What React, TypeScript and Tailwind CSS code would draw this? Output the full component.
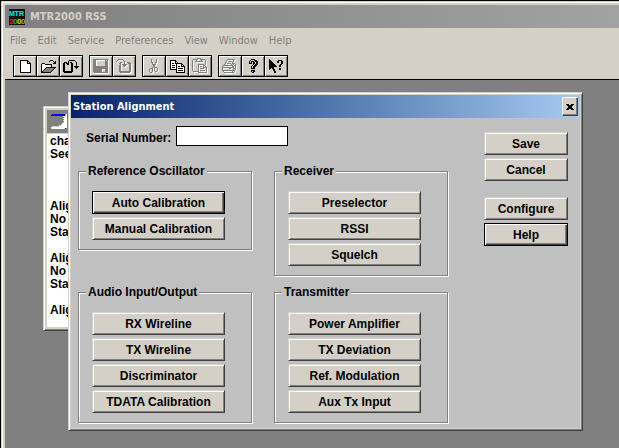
import React, { useState } from 'react';
import clsx from 'clsx';

const COLORS: Record<string, string> = {
  K: '#000000',
  W: '#ffffff',
  D: '#808080',
  B: '#0000ff',
  L: '#d4d0c8',
};

const newIcon = [
  'KKKKKKKK...',
  'KWWWWWWKK..',
  'KWWWWWWKWK.',
  'KWWWWWWKKKK',
  'KWWWWWWWWWK',
  'KWWWWWWWWWK',
  'KWWWWWWWWWK',
  'KWWWWWWWWWK',
  'KWWWWWWWWWK',
  'KWWWWWWWWWK',
  'KWWWWWWWWWK',
  'KWWWWWWWWWK',
  'KKKKKKKKKKK',
];

const openIcon = [
  '.........KKK...',
  '........K...K.K',
  '.............KK',
  '.KKK........KKK',
  'KWWWKKKKKKK....',
  'KWWWWWWWWWK....',
  'KWWWWWWWWWK....',
  'KWWWWKKKKKKKKKK',
  'KWWWKDDDDDDDDK.',
  'KWWKDDDDDDDDK..',
  'KWKDDDDDDDDK...',
  'KKDDDDDDDDK....',
  'KKKKKKKKKK.....',
];

const readIcon = [
  '......KKKKKK....',
  '.....K......K...',
  '.KKK.K.KK....K..',
  'KK.KKK..KK...K..',
  'KK..KK..KK...K..',
  'KK......KK...K..',
  'KK......KK.KKKKK',
  'KK......KK..KKK.',
  'KK......KK...K..',
  'KK......KK......',
  'KK......KK......',
  'KKKKKKKKKK......',
  '.KKKKKKKK.......',
];

const saveIcon = [
  'DDDDDDDDDDDDDDD',
  'DDD.........D.D',
  'DDD.........DDD',
  'DDD.........DDD',
  'DDD.........DDD',
  'DDD.........DDD',
  'DDD.........DDD',
  'DDDDDDDDDDDDDDD',
  'DDDDDDDDDDDDDDD',
  'DDDDDDDDDDDDDDD',
  'DDDDDDDDD...DDD',
  'DDDDDDDDD...DDD',
  'DDDDDDDDD...DDD',
  '.DDDDDDDDDDDDDD',
];

const writeIcon = [
  '..DDDDD........',
  '.D.....D.......',
  'D.......D......',
  '....DD..D..DDD.',
  '...DD...D...DDD',
  '....D.DDDDD..DD',
  '...DD..DDD...DD',
  '...DD...D....DD',
  '...DD........DD',
  '...DD........DD',
  '...DD........DD',
  '...DD........DD',
  '...DDDDDDDDDDDD',
  '....DDDDDDDDDD.',
];

const cutIcon = [
  '..D....D..',
  '..D....D..',
  '..D....D..',
  '..DD..DD..',
  '...D..D...',
  '...DDDD...',
  '....DD....',
  '....DD....',
  '...D.DDD..',
  '.DDD.D..D.',
  'D..D.D..D.',
  'D..D.D..D.',
  'D..D..DD..',
  '.DD.......',
];

const copyIcon = [
  'KKKKKK.........',
  'KWWWWKK........',
  'KWWWWKWK.......',
  'KWKKWKKKKKKK...',
  'KWWWWWKWWWWKK..',
  'KWKKKWKWWWWKWK.',
  'KWWWWWKWKKWKKKK',
  'KWKKKWKWWWWWWWK',
  'KWWWWWKWKKKKKWK',
  'KKKKKKKWWWWWWWK',
  '......KWKKKKKWK',
  '......KWWWWWWWK',
  '......KKKKKKKKK',
];

const pasteIcon = [
  '.....DDDD......',
  '.DDDDD..DDDDD..',
  'D...D....D...D.',
  'D..DDDDDDDD..D.',
  'D............D.',
  'D............D.',
  'D.....DDDDDD.D.',
  'D.....D....DD..',
  'D.....D.DD.D.D.',
  'D.....D....DDDD',
  'D.....D.DDDD..D',
  'D.....D.......D',
  'D.....D.DDDDD.D',
  '.DDDDDD.......D',
  '......DDDDDDDDD',
];

const printIcon = [
  '.....DDDDDDDD..',
  '....D......D...',
  '....D.DDDD.D...',
  '...D......D....',
  '...D.DDDD.DDD..',
  '..D......D.D.D.',
  '.DDDDDDDDDD.DD.',
  'D.........DD.D.',
  'DDDDDDDDDDDD.D.',
  'D......DD..DDD.',
  'D..........D.D.',
  'DDDDDDDDDDDDD..',
  '.D........D.D..',
  '..DDDDDDDDDD...',
];

const helpIcon = [
  '...KKKK...',
  '..KLLLKKK.',
  '.KLKKKLKKK',
  '.KLK.KKLKK',
  '.KKK.KKLKK',
  '.....KLKKK',
  '....KLKKK.',
  '...KLKKK..',
  '...KLKK...',
  '...KKKK...',
  '..........',
  '...KKKK...',
  '...KLKK...',
  '....KK....',
];

const contextHelpIcon = [
  'K..............',
  'KK.......KKKK..',
  'KKK.....KK..KK.',
  'KKKK....KK..KK.',
  'KKKKK.......KK.',
  'KKKKKK.....KK..',
  'KKKKKKK...KK...',
  'KKKKKKKK..KK...',
  'KKKKK..........',
  'KK.KK.....KK...',
  'K...KK....KK...',
  '....KK.........',
  '.....KK........',
  '.....KK........',
];

const pageIcon = [
  '.BBBBBBBBBBBBB.W',
  'KBBBBBBBBBBBBKLW',
  '............LWWW',
  '.............WWW',
  '............LWWW',
  '.............WWW',
  '............LWWW',
  '.............WWW',
  '............LWWW',
  '...........LWWWW',
  '..........LWWWWW',
  '........LLWWWWWW',
  '.LLLLLLLWWWWWWWW',
  'WWWWWWWWWWWWWWWW',
  'LWWWWWWWWWWWWWK.',
];

const closeIcon = ['KKK..KKK', '.KKKKKK.', '..KKKK..', '..KKKK..', '.KKKKKK.', 'KKK..KKK'];

const toolbar = [
  [
    { label: 'New', icon: newIcon },
    { label: 'Open', icon: openIcon },
    { label: 'Read', icon: readIcon },
  ],
  [
    { label: 'Save file', icon: saveIcon, disabled: true },
    { label: 'Write', icon: writeIcon, disabled: true },
  ],
  [
    { label: 'Cut', icon: cutIcon, disabled: true },
    { label: 'Copy', icon: copyIcon },
    { label: 'Paste', icon: pasteIcon, disabled: true },
  ],
  [
    { label: 'Print', icon: printIcon, disabled: true },
    { label: 'About', icon: helpIcon },
    { label: 'Context help', icon: contextHelpIcon },
  ],
];

const menus = ['File', 'Edit', 'Service', 'Preferences', 'View', 'Window', 'Help'];

const logLines = ['cha', 'See', '', '', '', 'Alig', 'No', 'Sta', '', 'Alig', 'No', 'Sta', '', 'Alig'];

function PixelIcon({ rows, embossed }: { rows: string[]; embossed?: boolean }) {
  const w = rows[0].length + (embossed ? 1 : 0);
  const h = rows.length + (embossed ? 1 : 0);
  const draw = (offset: number, fill?: string) =>
    rows.flatMap((row, y) =>
      row.split('').map((c, x) =>
        c === '.' ? null : (
          <rect key={`${x}-${y}`} x={x + offset} y={y + offset} width={1} height={1} fill={fill || COLORS[c]} />
        )
      )
    );

  return (
    <svg width={w} height={h} viewBox={`0 0 ${w} ${h}`} shapeRendering="crispEdges" aria-hidden="true" className="shrink-0">
      {embossed && <g>{draw(1, '#ffffff')}</g>}
      <g>{draw(0)}</g>
    </svg>
  );
}

function AppIcon() {
  return (
    <svg width="16" height="16" viewBox="0 0 16 16" aria-hidden="true" className="shrink-0">
      <rect width="16" height="16" fill="#101010" />
      <text x="0" y="7" fontSize="7" fontWeight="bold" fontFamily="Liberation Sans" fill="#00f0ff">
        MTR
      </text>
      <text x="0" y="15" fontSize="8" fontWeight="bold" fontFamily="Liberation Sans">
        <tspan x="0" fill="#ff0000">2</tspan>
        <tspan x="4" fill="#00c000">0</tspan>
        <tspan x="8" fill="#e0e000">0</tspan>
        <tspan x="12" fill="#a0a0a0">0</tspan>
      </text>
    </svg>
  );
}

function PushButton({ children, focused }: { children: React.ReactNode; focused?: boolean }) {
  return (
    <button
      type="button"
      className={clsx(
        'block h-[23px] w-full border bg-[#d4d0c8] text-center text-xs leading-4 font-bold text-black',
        focused
          ? 'border-black shadow-[inset_1px_1px_0_#fff,inset_-1px_-1px_0_#404040,inset_-2px_-2px_0_#808080]'
          : 'border-t-[#d4d0c8] border-r-[#404040] border-b-[#404040] border-l-[#d4d0c8] shadow-[inset_1px_1px_0_#fff,inset_-1px_-1px_0_#808080]'
      )}
    >
      {children}
    </button>
  );
}

function Group({ title, items, focused }: { title: string; items: string[]; focused?: string }) {
  return (
    <fieldset className="min-w-0 border border-[#808080] pr-[26px] pb-[9px] pl-[13px] shadow-[1px_1px_0_#fff,inset_1px_1px_0_#fff]">
      <legend className="-ml-1.5 bg-[#c0c0c0] px-0.5 text-xs leading-4 font-bold">{title}</legend>
      <div className="flex flex-col gap-[3px] pt-3">
        {items.map((item) => (
          <PushButton key={item} focused={item === focused}>
            {item}
          </PushButton>
        ))}
      </div>
    </fieldset>
  );
}

function StationAlignment() {
  const [serial, setSerial] = useState('');

  return (
    <section
      role="dialog"
      aria-labelledby="dialog-title"
      className="absolute top-3 left-[63px] w-[515px] border border-t-[#d4d0c8] border-r-[#404040] border-b-[#404040] border-l-[#d4d0c8] bg-[#d4d0c8] p-0.5 shadow-[inset_1px_1px_0_#fff,inset_-1px_-1px_0_#808080]"
    >
      <header className="flex h-[23px] items-center justify-between bg-linear-to-r from-[#0a246a] to-[#a6caf0] pr-0.5 pl-0.5">
        <h2 id="dialog-title" className="font-['DejaVu_Sans_Condensed','DejaVu_Sans',sans-serif] text-[11px] leading-4 font-bold text-white">
          Station Alignment
        </h2>
        <button
          type="button"
          aria-label="Close"
          className="flex h-[19px] w-4 items-center justify-center border border-t-white border-r-[#404040] border-b-[#404040] border-l-white bg-[#d4d0c8] shadow-[inset_-1px_-1px_0_#808080]"
        >
          <PixelIcon rows={closeIcon} />
        </button>
      </header>

      <div className="flex items-start justify-between bg-[#c0c0c0] pt-2 pr-3 pb-[5px] pl-[7px]">
        <div className="w-[370px]">
          <div className="flex items-end gap-[5px] pl-2">
            <label htmlFor="serial" className="text-xs leading-4 font-bold">
              Serial Number:
            </label>
            <input
              id="serial"
              type="text"
              value={serial}
              onChange={(e) => setSerial(e.target.value)}
              className="h-5 w-28 border border-black bg-white px-1 text-xs outline-none"
            />
          </div>
          <div className="mt-[17px] grid grid-cols-2 items-start gap-x-[22px] gap-y-2">
            <Group
              title="Reference Oscillator"
              items={['Auto Calibration', 'Manual Calibration']}
              focused="Auto Calibration"
            />
            <Group title="Receiver" items={['Preselector', 'RSSI', 'Squelch']} />
            <Group title="Audio Input/Output" items={['RX Wireline', 'TX Wireline', 'Discriminator', 'TDATA Calibration']} />
            <Group title="Transmitter" items={['Power Amplifier', 'TX Deviation', 'Ref. Modulation', 'Aux Tx Input']} />
          </div>
        </div>

        <div className="flex w-[84px] flex-col gap-4 pt-1.5">
          <div className="flex flex-col gap-[3px]">
            <PushButton>Save</PushButton>
            <PushButton>Cancel</PushButton>
          </div>
          <div className="flex flex-col gap-[3px]">
            <PushButton>Configure</PushButton>
            <PushButton focused>Help</PushButton>
          </div>
        </div>
      </div>
    </section>
  );
}

export default function App() {
  return (
    <div className="flex min-h-screen flex-col border-t border-l border-black bg-[#d4d0c8] font-['Liberation_Sans',Arial,sans-serif] text-black">
      <div className="flex grow flex-col border-t border-l border-[#d4d0c8]">
        <div className="flex grow flex-col border-t border-l border-white pt-0.5 pl-0.5">
          <header className="flex h-[23px] items-center gap-[5px] bg-linear-to-r from-[#808080] to-[#a2a2a2] pl-1">
            <AppIcon />
            <h1 className="font-['DejaVu_Sans_Condensed','DejaVu_Sans',sans-serif] text-[11px] leading-4 font-bold text-[#d4d0c8]">
              MTR2000 RSS
            </h1>
          </header>

          <nav className="flex h-6 items-center gap-[11px] pt-0.5 pl-[5px]">
            {menus.map((menu) => (
              <button
                key={menu}
                type="button"
                className="font-['DejaVu_Sans_Condensed','DejaVu_Sans',sans-serif] text-[11px] leading-4 text-[#808080]"
              >
                {menu}
              </button>
            ))}
          </nav>

          <div className="flex gap-1.5 border-b border-black pt-[3px] pb-0.5 pl-2">
            {toolbar.map((group, i) => (
              <div key={i} className="flex -space-x-px">
                {group.map((tool) => (
                  <button
                    key={tool.label}
                    type="button"
                    aria-label={tool.label}
                    disabled={tool.disabled}
                    className="flex h-[22px] w-6 items-center justify-center border border-black bg-[#d4d0c8] shadow-[inset_1px_1px_0_#fff,inset_-1px_-1px_0_#808080]"
                  >
                    <PixelIcon rows={tool.icon} embossed={tool.disabled} />
                  </button>
                ))}
              </div>
            ))}
          </div>

          {/* MDI workspace */}
          <main className="relative grow overflow-hidden bg-[#808080]">
            <section className="absolute top-[26px] left-[38px] w-[400px] border border-t-[#d4d0c8] border-r-[#404040] border-b-[#404040] border-l-[#d4d0c8] bg-[#d4d0c8] p-[3px] shadow-[inset_1px_1px_0_#fff,inset_-1px_-1px_0_#808080]">
              <header className="flex h-[23px] items-center bg-[#808080] pl-1">
                <PixelIcon rows={pageIcon} />
              </header>
              <div className="mt-px h-[193px] bg-white pt-px pl-[3px] text-xs leading-[13px] font-bold">
                {logLines.map((line, i) => (
                  <p key={i} className="h-[13px]">
                    {line}
                  </p>
                ))}
              </div>
            </section>
            <StationAlignment />
          </main>
        </div>
      </div>
    </div>
  );
}
